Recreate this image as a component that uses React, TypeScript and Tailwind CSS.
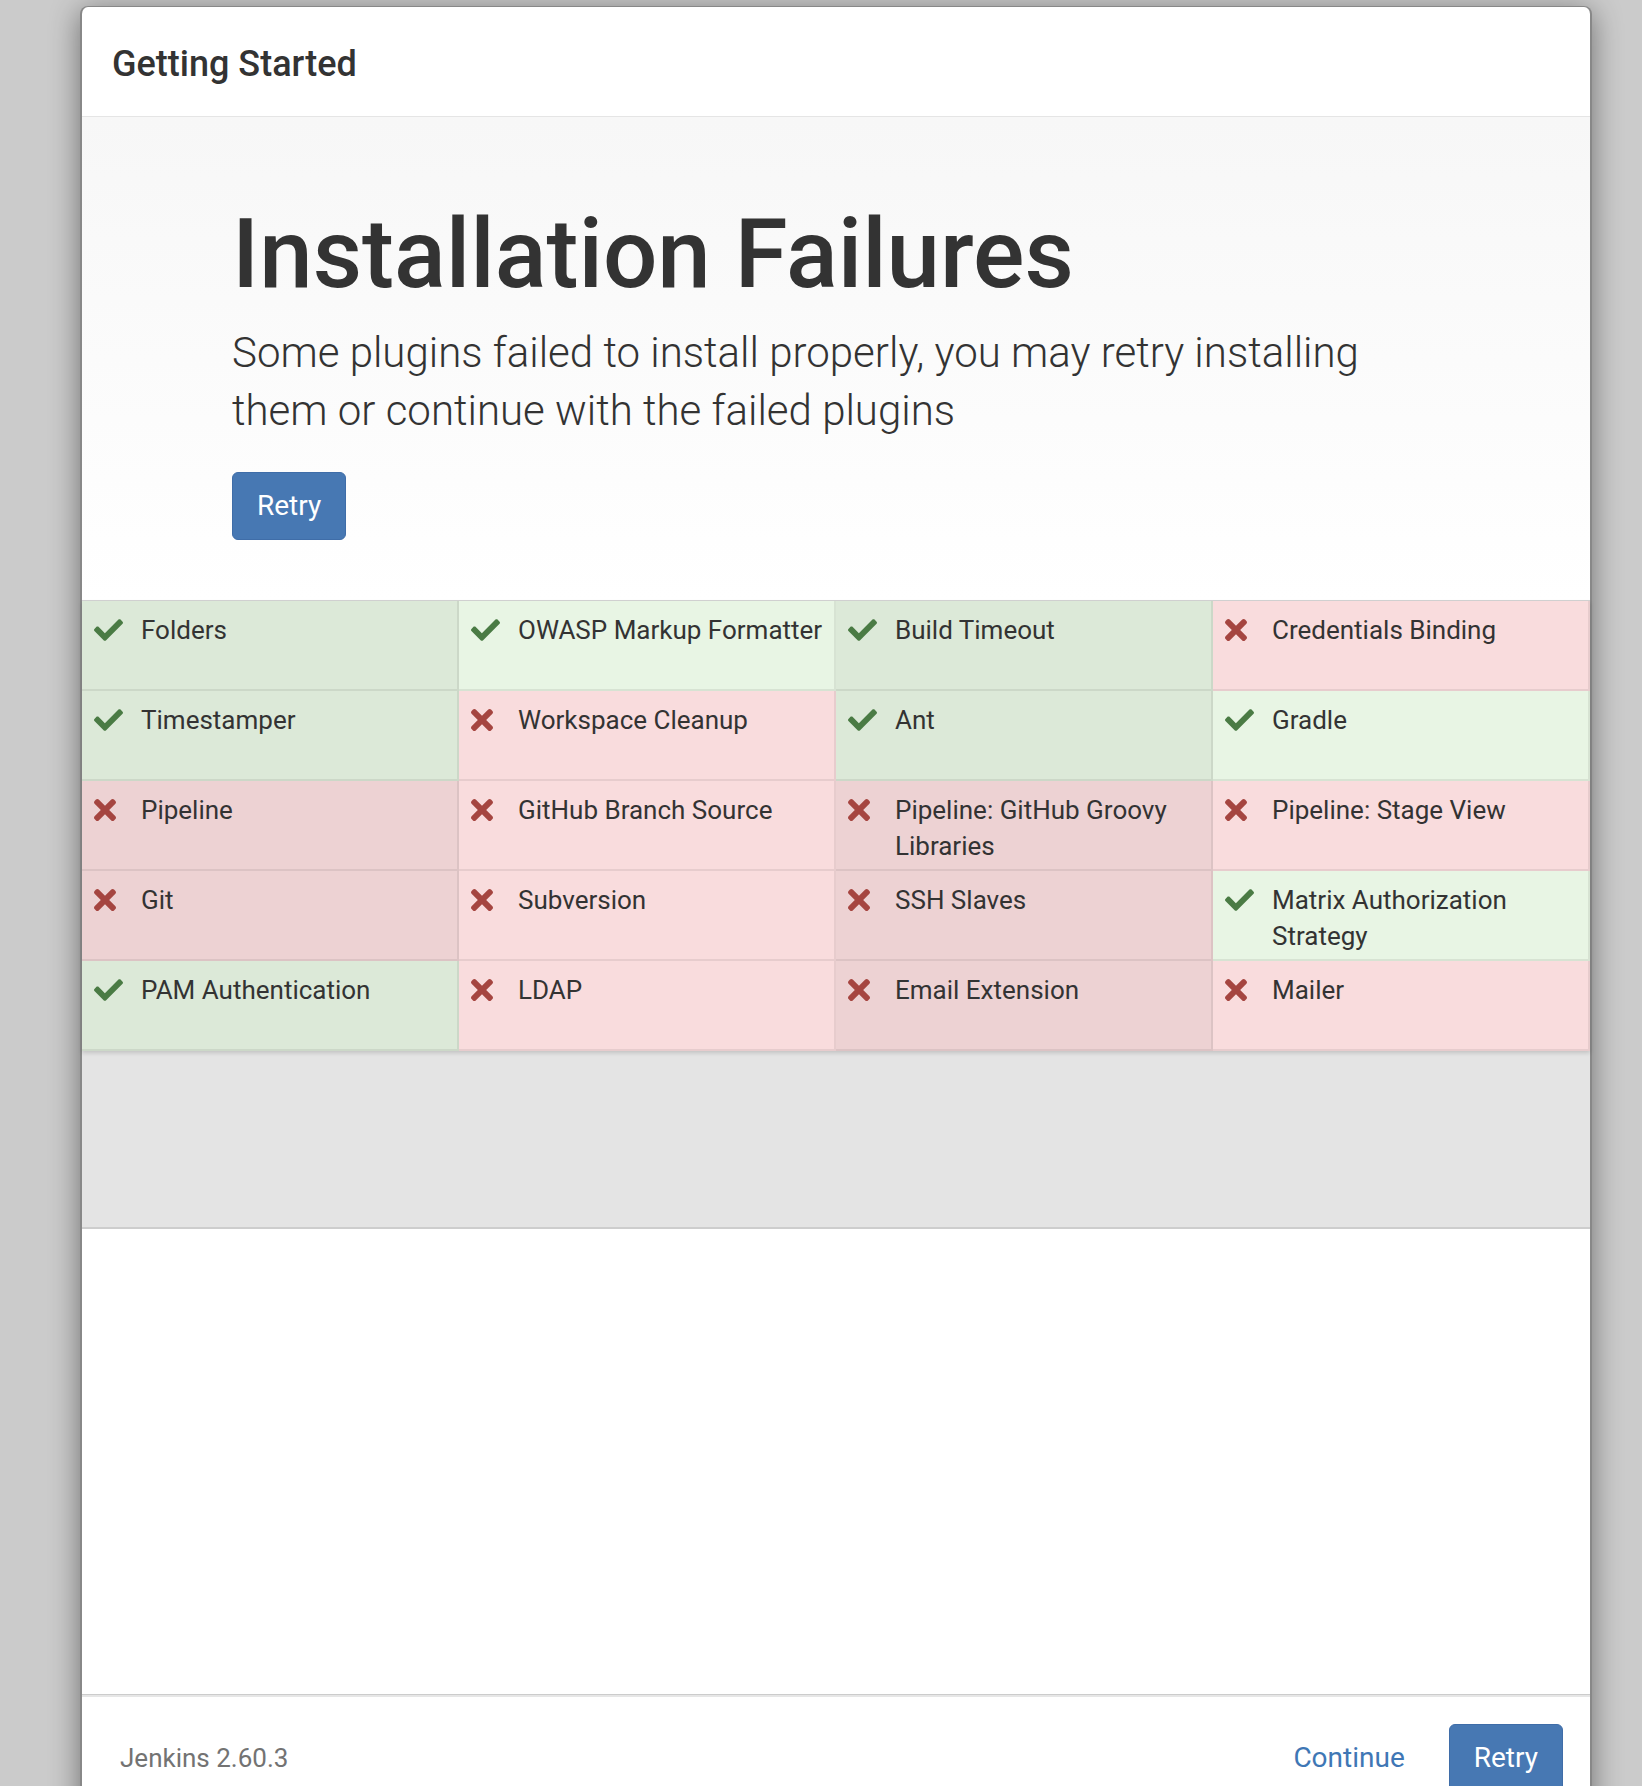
type Plugin = { name: string; ok: boolean };

const plugins: Plugin[] = [
  { name: 'Folders', ok: true },
  { name: 'OWASP Markup Formatter', ok: true },
  { name: 'Build Timeout', ok: true },
  { name: 'Credentials Binding', ok: false },
  { name: 'Timestamper', ok: true },
  { name: 'Workspace Cleanup', ok: false },
  { name: 'Ant', ok: true },
  { name: 'Gradle', ok: true },
  { name: 'Pipeline', ok: false },
  { name: 'GitHub Branch Source', ok: false },
  { name: 'Pipeline: GitHub Groovy Libraries', ok: false },
  { name: 'Pipeline: Stage View', ok: false },
  { name: 'Git', ok: false },
  { name: 'Subversion', ok: false },
  { name: 'SSH Slaves', ok: false },
  { name: 'Matrix Authorization Strategy', ok: true },
  { name: 'PAM Authentication', ok: true },
  { name: 'LDAP', ok: false },
  { name: 'Email Extension', ok: false },
  { name: 'Mailer', ok: false },
];

function CheckIcon() {
  return (
    <svg width="29" height="22" viewBox="0 64 512 384" className="text-[#4a7b44]" fill="currentColor">
      <path d="M173.898 439.404l-166.4-166.4c-9.997-9.997-9.997-26.206 0-36.204l36.203-36.204c9.997-9.998 26.207-9.998 36.204 0L192 312.69 432.095 72.596c9.997-9.997 26.207-9.997 36.204 0l36.203 36.204c9.997 9.997 9.997 26.206 0 36.204l-294.4 294.401c-9.998 9.997-26.207 9.997-36.204-.001z" />
    </svg>
  );
}

function TimesIcon() {
  return (
    <svg width="22" height="22" viewBox="0 80 352 352" className="text-[#a54540]" fill="currentColor">
      <path d="M242.72 256l100.07-100.07c12.28-12.28 12.28-32.19 0-44.48l-22.24-22.24c-12.28-12.280-32.19-12.28-44.48 0L176 189.28 75.93 89.21c-12.28-12.28-32.19-12.28-44.48 0L9.21 111.45c-12.28 12.28-12.28 32.19 0 44.48L109.28 256 9.21 356.07c-12.28 12.28-12.28 32.19 0 44.48l22.24 22.24c12.28 12.28 32.2 12.28 44.48 0L176 322.72l100.07 100.07c12.28 12.28 32.2 12.28 44.48 0l22.24-22.24c12.28-12.28 12.28-32.19 0-44.48L242.72 256z" />
    </svg>
  );
}

function cellColor(ok: boolean, dark: boolean) {
  if (ok) return dark ? 'bg-[#dce9d8]' : 'bg-[#e8f5e4]';
  return dark ? 'bg-[#edd2d3]' : 'bg-[#f9dcdd]';
}

function PluginCell({ plugin, index }: { plugin: Plugin; index: number }) {
  const dark = index % 2 === 0;
  return (
    <div
      className={`flex h-[90px] border-r-2 border-b-2 border-black/[0.07] pt-[11px] pl-[12px] pr-2 ${cellColor(plugin.ok, dark)}`}
    >
      <div className="flex h-[36px] w-[47px] flex-none items-center">
        {plugin.ok ? <CheckIcon /> : <TimesIcon />}
      </div>
      <div className="text-[26px] leading-[36px] text-[#333]">{plugin.name}</div>
    </div>
  );
}

export default function App() {
  return (
    <div className="h-[1786px] overflow-hidden bg-[#cbcbcb] pl-[80px] pt-[6px] font-['Roboto','Liberation_Sans',sans-serif]">
      <div className="w-[1512px] rounded-t-[8px] border-x-2 border-t border-[#888] bg-white shadow-[0_5px_30px_rgba(0,0,0,0.45)]">
        {/* header */}
        <div className="h-[110px] rounded-t-[8px] border-b border-[#e5e5e5] pl-[30px] pt-[37px]">
          <h4 className="text-[36px] font-medium leading-[40px] text-[#333]">Getting Started</h4>
        </div>

        {/* jumbotron */}
        <div className="bg-linear-to-b from-[#f7f7f7] to-white pl-[150px] pt-[84px]">
          <h1 className="text-[96px] font-medium leading-[106px] text-[#333]">Installation Failures</h1>
          <p className="mt-[17px] w-[1180px] text-[42px] font-light leading-[58px] text-[#333]">
            Some plugins failed to install properly, you may retry installing them or continue with the failed plugins
          </p>
          <button className="mt-[32px] h-[68px] rounded-[6px] border border-[#3f6da8] bg-[#4778b3] px-[24px] text-[28px] text-white">
            Retry
          </button>
          <div className="h-[60px]" />
        </div>

        {/* plugin grid */}
        <div className="border-t border-[#d4d4d4] bg-[#e4e4e4]">
          <div className="grid grid-cols-4 shadow-[0_2px_4px_rgba(0,0,0,0.15)]">
            {plugins.map((p, i) => (
              <PluginCell key={p.name} plugin={p} index={i % 4} />
            ))}
          </div>
          <div className="h-[178px] border-b-2 border-[#cdcdcd]" />
        </div>

        <div className="h-[465px] bg-white" />

        {/* footer */}
        <div className="h-px bg-[#cccccc]" />
        <div className="h-[2px] bg-[#e6e6e6]" />
        <div className="flex items-center justify-between pl-[38px] pr-[27px] pt-[27px] pb-[27px]">
          <span className="text-[26px] leading-[36px] text-[#737373]">Jenkins 2.60.3</span>
          <div className="flex items-center">
            <a className="mr-[44px] text-[28px] leading-[36px] text-[#3f77b5]">Continue</a>
            <button className="h-[68px] rounded-[6px] border border-[#3f6da8] bg-[#4778b3] px-[24px] text-[28px] text-white">
              Retry
            </button>
          </div>
        </div>
      </div>
    </div>
  );
}
